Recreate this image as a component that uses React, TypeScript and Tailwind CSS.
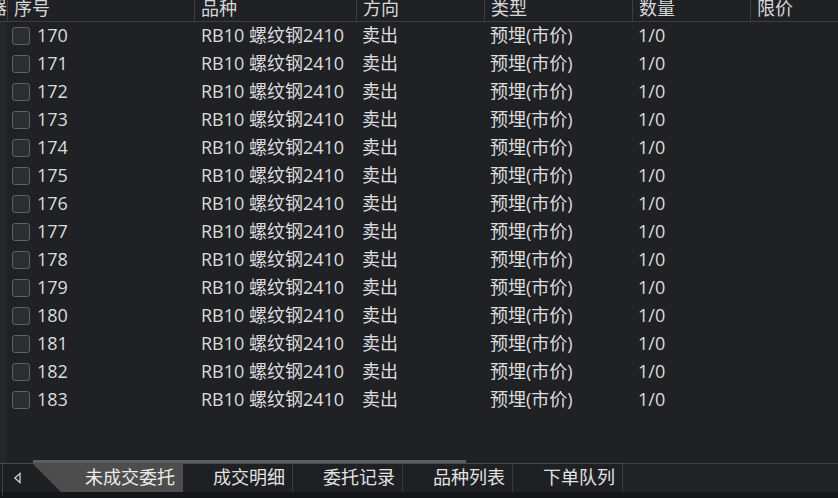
import React from "react";

const rows = Array.from({ length: 14 }, (_, i) => 170 + i);
const font = { fontFamily: '"Open Sans", "Noto Sans CJK SC", "Microsoft YaHei", sans-serif' };

export default function App() {
  const cols = [
    { t: "序号", w: "w-[187px]" },
    { t: "品种", w: "w-[162px]" },
    { t: "方向", w: "w-[128px]" },
    { t: "类型", w: "w-[148px]" },
    { t: "数量", w: "w-[118px]" },
    { t: "限价", w: "flex-1" },
  ];
  return (
    <div
      className="w-[838px] h-[498px] bg-[#1f2125] flex flex-col overflow-hidden text-[18px] text-[#dcdcdc]"
      style={font}
    >
      <div className="flex h-[460px]">
        <div className="w-[7px] flex flex-col shrink-0">
          <div className="h-[22px] overflow-hidden relative border-b border-[#3c3e42]">
            <span className="absolute right-0 top-[-4px] leading-[22px] text-[#cfcfcf]">器</span>
          </div>
          <div className="flex-1 bg-[#25272b]" />
        </div>
        <div className="flex-1 flex flex-col">
          <div className="flex h-[22px] border-b border-[#3c3e42]">
            {cols.map((c) => (
              <div
                key={c.t}
                className={`${c.w} border-l border-[#3c3e42] pl-[6px] leading-[17px] text-[#d8d8d8] overflow-hidden`}
              >
                {c.t}
              </div>
            ))}
          </div>
          {rows.map((n) => (
            <div key={n} className="flex h-[28px] items-center leading-[24px] pb-[3px]">
              <div className="w-[187px] flex items-center pl-[5px]">
                <div className="w-[18px] h-[18px] mt-[3px] rounded-[3px] border border-[#5f6063] bg-[#2c2d30]" />
                <span className="ml-[7px]">{n}</span>
              </div>
              <div className="w-[162px] pl-[7px] whitespace-nowrap">RB10 螺纹钢2410</div>
              <div className="w-[128px] pl-[6px]">卖出</div>
              <div className="w-[148px] pl-[6px]">预埋(市价)</div>
              <div className="w-[118px] pl-[6px]">1/0</div>
              <div className="flex-1" />
            </div>
          ))}
        </div>
      </div>
      {/* scrollbar thumb line */}
      <div className="h-[3px] flex">
        <div className="w-[7px] bg-[#25272b]" />
        <div className="w-[26px]" />
        <div className="w-[433px] bg-[#5e5e5e]" />
      </div>
      {/* tab bar */}
      <div className="h-[29px] flex border-t border-[#4a4b4e] bg-[#1d1f23] relative">
        <div className="w-[3px] border-r border-[#3f4044] h-[32px]" />
        <div className="w-[30px] flex items-center pl-[10px]">
          <svg width="9" height="12" viewBox="0 0 9 12">
            <path d="M7 1.5 L1.8 6 L7 10.5 Z" fill="none" stroke="#cfcfcf" strokeWidth="1.3" />
          </svg>
        </div>
        <div className="relative w-[150px] h-full">
          <svg className="absolute inset-0" width="150" height="28" viewBox="0 0 150 28">
            <polygon points="0,0 150,0 150,28 28,28" fill="#4d4d4d" />
          </svg>
          <span className="absolute left-[52px] top-0 leading-[26px] text-[#ececec]">未成交委托</span>
        </div>
        {["成交明细", "委托记录", "品种列表", "下单队列"].map((t) => (
          <div
            key={t}
            className="w-[110px] h-full border-r border-[#3a3b3e] bg-[#1e2024] pl-[30px] leading-[26px] text-[#e2e2e2]"
          >
            {t}
          </div>
        ))}
        <div className="flex-1 h-full bg-[#212327] border-t border-[#3e4044] -mt-[1px]" />
      </div>
      <div className="flex-1 bg-[#151619]" />
    </div>
  );
}
